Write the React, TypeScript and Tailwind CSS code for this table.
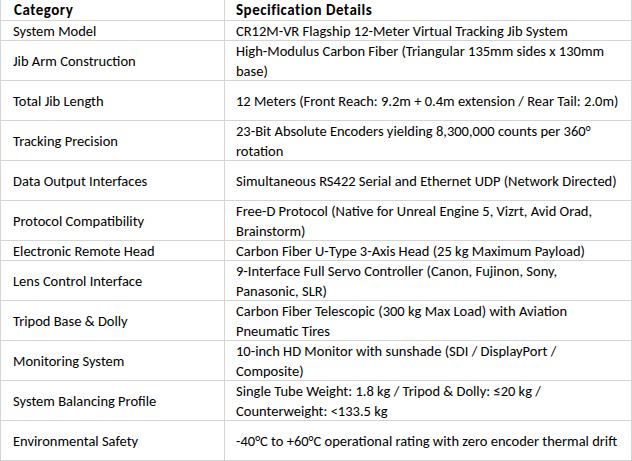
// Spec sheet rows; line breaks follow the source sheet's wrapping.
const rows: { label: string; lines: string[] }[] = [
  { label: 'System Model', lines: ['CR12M-VR Flagship 12-Meter Virtual Tracking Jib System'] },
  { label: 'Jib Arm Construction', lines: ['High-Modulus Carbon Fiber (Triangular 135mm sides x 130mm', 'base)'] },
  { label: 'Total Jib Length', lines: ['12 Meters (Front Reach: 9.2m + 0.4m extension / Rear Tail: 2.0m)'] },
  { label: 'Tracking Precision', lines: ['23-Bit Absolute Encoders yielding 8,300,000 counts per 360°', 'rotation'] },
  { label: 'Data Output Interfaces', lines: ['Simultaneous RS422 Serial and Ethernet UDP (Network Directed)'] },
  { label: 'Protocol Compatibility', lines: ['Free-D Protocol (Native for Unreal Engine 5, Vizrt, Avid Orad,', 'Brainstorm)'] },
  { label: 'Electronic Remote Head', lines: ['Carbon Fiber U-Type 3-Axis Head (25 kg Maximum Payload)'] },
  { label: 'Lens Control Interface', lines: ['9-Interface Full Servo Controller (Canon, Fujinon, Sony,', 'Panasonic, SLR)'] },
  { label: 'Tripod Base & Dolly', lines: ['Carbon Fiber Telescopic (300 kg Max Load) with Aviation', 'Pneumatic Tires'] },
  { label: 'Monitoring System', lines: ['10-inch HD Monitor with sunshade (SDI / DisplayPort /', 'Composite)'] },
  { label: 'System Balancing Profile', lines: ['Single Tube Weight: 1.8 kg / Tripod & Dolly: ≤20 kg /', 'Counterweight: <133.5 kg'] },
  { label: 'Environmental Safety', lines: ['-40°C to +60°C operational rating with zero encoder thermal drift'] },
];

const tallRows = new Set(['Total Jib Length', 'Data Output Interfaces', 'Environmental Safety']);

export default function App() {
  return (
    <div
      className="w-[632px] h-[461px] bg-white text-black text-[14.5px] leading-[20px]"
      style={{ fontFamily: 'Calibri, Carlito, Lato, sans-serif' }}
    >
      <div className="grid grid-cols-[225px_407px] h-[21px] border-b border-[#d4d4d4] font-bold text-[15px] tracking-[0.5px]">
        <div className="border-l border-r border-[#d4d4d4] pl-[13px] flex items-center">Category</div>
        <div className="border-r border-[#d4d4d4] pl-[11px] flex items-center">Specification Details</div>
      </div>
      {rows.map((r) => {
        const tall = r.lines.length > 1 || tallRows.has(r.label);
        return (
          <div
            key={r.label}
            className={`grid grid-cols-[225px_407px] border-b border-[#d4d4d4] ${tall ? 'h-[40px]' : 'h-[20px]'}`}
          >
            <div className="border-l border-r border-[#d4d4d4] pl-3 flex items-center whitespace-nowrap">
              {r.label}
            </div>
            <div className="border-r border-[#d4d4d4] pl-[11px] flex flex-col justify-center whitespace-nowrap">
              {r.lines.map((l) => (
                <span key={l}>{l}</span>
              ))}
            </div>
          </div>
        );
      })}
    </div>
  );
}
